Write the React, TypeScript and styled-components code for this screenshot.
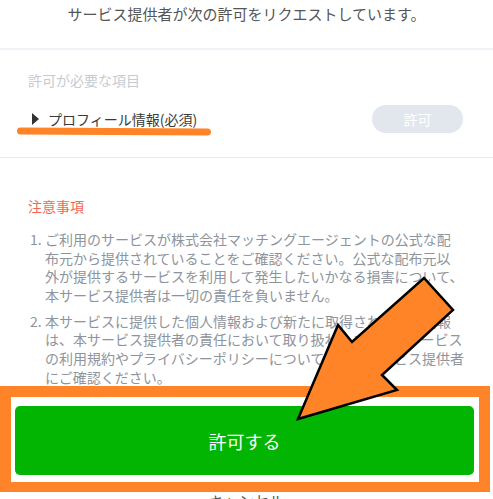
import React from 'react';
import styled, { createGlobalStyle } from 'styled-components';

const notes: string[][] = [
  [
    'ご利用のサービスが株式会社マッチングエージェントの公式な配',
    '布元から提供されていることをご確認ください。公式な配布元以',
    '外が提供するサービスを利用して発生したいかなる損害について、',
    '本サービス提供者は一切の責任を負いません。',
  ],
  [
    '本サービスに提供した個人情報および新たに取得された利用情報',
    'は、本サービス提供者の責任において取り扱われます。本サービス',
    'の利用規約やプライバシーポリシーについては、本サービス提供者',
    'にご確認ください。',
  ],
];

function App() {
  return (
    <Page>
      <GlobalStyle />
      <Header>サービス提供者が次の許可をリクエストしています。</Header>
      <Permissions>
        <Label>許可が必要な項目</Label>
        <PermissionRow>
          <ItemName>
            <Caret />
            プロフィール情報(必須)
          </ItemName>
          <AllowChip>許可</AllowChip>
        </PermissionRow>
      </Permissions>
      <Notes>
        <NotesTitle>注意事項</NotesTitle>
        <NoteList>
          {notes.map((lines, i) => (
            <NoteItem key={i}>
              <NoteNumber>{i + 1}.</NoteNumber>
              <NoteText>
                {lines.map((line, j) => (
                  <span key={j}>{line}</span>
                ))}
              </NoteText>
            </NoteItem>
          ))}
        </NoteList>
      </Notes>
      <Highlight>
        <AllowButton>許可する</AllowButton>
      </Highlight>
      <Cancel>キャンセル</Cancel>

      <Underline />
      <Arrow viewBox="0 0 493 499" width="493" height="499">
        <polygon
          points="298,419 338,325 352,342 424,278 453,310 382,375 397,390"
          fill="#ff8427"
          stroke="#000"
          strokeWidth="2.5"
          strokeLinejoin="miter"
        />
      </Arrow>
    </Page>
  );
}

const GlobalStyle = createGlobalStyle`
  html, body {
    margin: 0;
    background: #fff;
    overflow: hidden;
  }
  body {
    font-family: "Noto Sans CJK JP", "Noto Sans", sans-serif;
  }
`;

const Page = styled.div`
  position: relative;
  width: 493px;
  height: 499px;
  overflow: hidden;
`;

const Header = styled.div`
  box-sizing: border-box;
  height: 50px;
  padding-top: 3px;
  text-align: center;
  font-size: 15px;
  line-height: 22px;
  color: #555;
  border-bottom: 2px solid #eef1f5;
`;

const Permissions = styled.div`
  padding: 20px 30px 24px 28px;
  border-bottom: 1px solid #e8ebef;
`;

const Label = styled.div`
  font-size: 14px;
  line-height: 20px;
  color: #c6cbd3;
`;

const PermissionRow = styled.div`
  display: flex;
  align-items: center;
  justify-content: space-between;
  margin-top: 15px;
  height: 28px;
`;

const ItemName = styled.div`
  display: flex;
  align-items: center;
  gap: 9px;
  padding-left: 4px;
  font-size: 14px;
  color: #3a3a3a;
`;

const Caret = styled.span`
  width: 0;
  height: 0;
  border-top: 6px solid transparent;
  border-bottom: 6px solid transparent;
  border-left: 7px solid #333;
`;

const AllowChip = styled.div`
  width: 91px;
  height: 28px;
  border-radius: 14px;
  background: #e2e7ee;
  color: #fff;
  font-size: 14px;
  display: flex;
  align-items: center;
  justify-content: center;
`;

const Notes = styled.div`
  padding: 38px 0 0 28px;
`;

const NotesTitle = styled.div`
  font-size: 14px;
  line-height: 20px;
  color: #f5645a;
`;

const NoteList = styled.div`
  margin-top: 14px;
  padding-left: 2px;
  display: flex;
  flex-direction: column;
  gap: 7.5px;
`;

const NoteItem = styled.div`
  display: grid;
  grid-template-columns: 15px 1fr;
  font-size: 14px;
  line-height: 18.6px;
  color: #8e949d;
`;

const NoteNumber = styled.span``;

const NoteText = styled.div`
  display: flex;
  flex-direction: column;
  white-space: nowrap;
`;

const Highlight = styled.div`
  box-sizing: border-box;
  width: 490px;
  border: 11px solid #ff8429;
  border-bottom-width: 10px;
  padding: 9px 5px 7px 4px;
  background: #fff;
`;

const AllowButton = styled.div`
  height: 69px;
  border-radius: 5px;
  background: #03b503;
  color: #fff;
  font-size: 18px;
  display: flex;
  align-items: center;
  justify-content: center;
`;

const Cancel = styled.div`
  text-align: center;
  font-size: 15px;
  line-height: 18px;
  color: #555;
`;

const Underline = styled.div`
  position: absolute;
  left: 17px;
  top: 128px;
  width: 194px;
  height: 7px;
  border-radius: 4px;
  background: #ff8427;
  transform: rotate(0.3deg);
`;

const Arrow = styled.svg`
  position: absolute;
  left: 0;
  top: 0;
  pointer-events: none;
`;

export default App;
